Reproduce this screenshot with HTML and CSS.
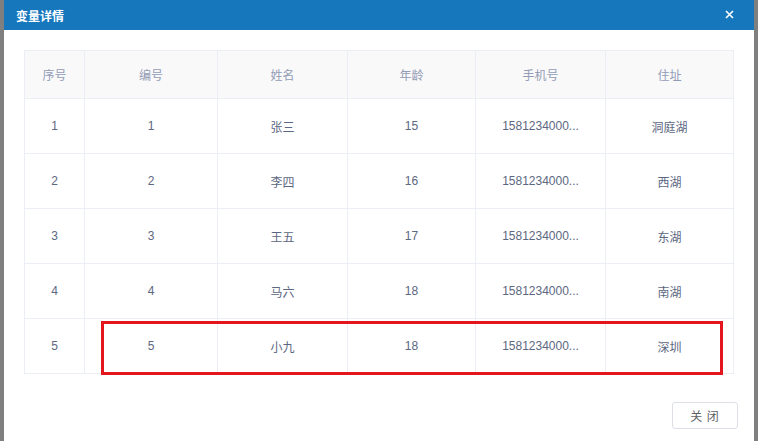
FILE: index.html
```html
<!DOCTYPE html>
<html lang="zh-CN">
  <head>
    <meta charset="UTF-8" />
    <title>变量详情</title>
    <link rel="stylesheet" href="styles.css">
  </head>
  <body>
    <div class="dialog">
      <div class="dialog-header">
        <span class="dialog-title">变量详情</span>
        <span class="dialog-close">
          <svg width="9" height="9" viewBox="0 0 9 9">
            <path d="M1 1 L8 8 M8 1 L1 8" stroke="#fff" stroke-width="1.6" />
          </svg>
        </span>
      </div>

      <div class="dialog-body">
        <div class="table-wrap">
          <table class="grid">
            <colgroup>
              <col style="width: 60px" />
              <col style="width: 133px" />
              <col style="width: 130px" />
              <col style="width: 128px" />
              <col style="width: 130px" />
              <col style="width: 128px" />
            </colgroup>
            <thead>
              <tr>
                <th>序号</th>
                <th>编号</th>
                <th>姓名</th>
                <th>年龄</th>
                <th>手机号</th>
                <th>住址</th>
              </tr>
            </thead>
            <tbody>
              <tr>
                <td>1</td><td>1</td><td class="cn">张三</td><td>15</td>
                <td>1581234000...</td><td class="cn">洞庭湖</td>
              </tr>
              <tr>
                <td>2</td><td>2</td><td class="cn">李四</td><td>16</td>
                <td>1581234000...</td><td class="cn">西湖</td>
              </tr>
              <tr>
                <td>3</td><td>3</td><td class="cn">王五</td><td>17</td>
                <td>1581234000...</td><td class="cn">东湖</td>
              </tr>
              <tr>
                <td>4</td><td>4</td><td class="cn">马六</td><td>18</td>
                <td>1581234000...</td><td class="cn">南湖</td>
              </tr>
              <tr>
                <td>5</td><td>5</td><td class="cn">小九</td><td>18</td>
                <td>1581234000...</td><td class="cn">深圳</td>
              </tr>
            </tbody>
          </table>
          <!-- highlight box over last row -->
          <div class="highlight"></div>
        </div>
      </div>

      <div class="dialog-footer">
        <button type="button" class="btn">关 闭</button>
      </div>
    </div>
  </body>
</html>
```

FILE: styles.css
```css
html,
body {
  margin: 0;
  padding: 0;
  height: 100%;
}
body {
  background: #7f7f7f;
  font-family: "Liberation Sans", "Noto Sans CJK SC", sans-serif;
  font-size: 12px;
}
.dialog {
  margin-left: 4px;
  width: 750px;
  height: 441px;
  background: #fff;
  display: flex;
  flex-direction: column;
}
.dialog-header {
  height: 30px;
  background: #1677bc;
  display: flex;
  align-items: center;
  justify-content: space-between;
  padding: 0 20px 0 12px;
}
.dialog-title {
  color: #fff;
  font-size: 12px;
  font-weight: bold;
  font-family: "Noto Sans CJK SC", sans-serif;
}
.dialog-close {
  display: flex;
  align-items: center;
  margin-top: -1px;
}
.dialog-body {
  padding: 20px 21px 0 20px;
}
.table-wrap {
  position: relative;
}
.grid {
  width: 709px;
  border-collapse: collapse;
  table-layout: fixed;
}
.grid th,
.grid td {
  border: 1px solid #ebeef5;
  text-align: center;
  padding: 0;
  white-space: nowrap;
  overflow: hidden;
}
.grid th {
  height: 47px;
  background: #f9f9fa;
  color: #939cb5;
  font-weight: normal;
  font-family: "Noto Sans CJK SC", sans-serif;
}
.grid td {
  height: 54px;
  color: #5c6781;
}
.grid td.cn {
  font-family: "Noto Sans CJK SC", sans-serif;
}
.highlight {
  position: absolute;
  left: 77px;
  top: 271px;
  width: 616px;
  height: 48px;
  border: 3px solid #e3161d;
}
.dialog-footer {
  margin-top: auto;
  display: flex;
  justify-content: flex-end;
  padding: 0 16px 12px 0;
}
.btn {
  width: 66px;
  height: 27px;
  background: #fff;
  border: 1px solid #dcdfe6;
  border-radius: 3px;
  color: #606266;
  font-size: 12px;
  font-family: "Noto Sans CJK SC", sans-serif;
  letter-spacing: 1px;
  cursor: pointer;
}
```
